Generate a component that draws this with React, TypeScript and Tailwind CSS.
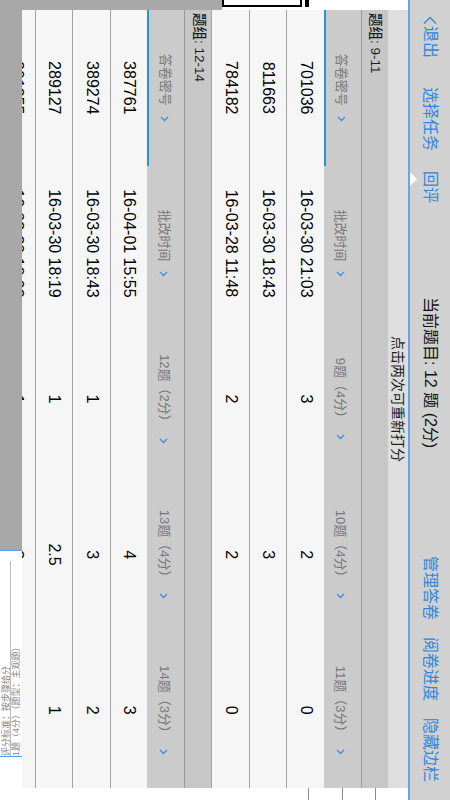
import React from "react";

type Row = [string, string, string, string, string];

const sections: { label: string; cols: string[]; rows: Row[] }[] = [
  {
    label: "题组: 9-11",
    cols: ["9题（4分）", "10题（4分）", "11题（3分）"],
    rows: [
      ["701036", "16-03-30 21:03", "3", "2", "0"],
      ["811663", "16-03-30 18:43", "", "3", ""],
      ["784182", "16-03-28 11:48", "2", "2", "0"],
    ],
  },
  {
    label: "题组: 12-14",
    cols: ["12题（2分）", "13题（4分）", "14题（3分）"],
    rows: [
      ["387761", "16-04-01 15:55", "", "4", "3"],
      ["389274", "16-03-30 18:43", "1", "3", "2"],
      ["289127", "16-03-30 18:19", "1", "2.5", "1"],
      ["291355", "16-03-30 18:02", "1", "3", ""],
    ],
  },
];

function Chevron() {
  return (
    <svg width="6" height="9" viewBox="0 0 6 9" className="ml-[10px] shrink-0">
      <path d="M1 1l3.5 3.5L1 8" fill="none" stroke="#3a8fe0" strokeWidth="1.3" />
    </svg>
  );
}

function Section({ label, cols, rows }: (typeof sections)[number]) {
  const heads = ["答卷密号", "批改时间", ...cols];
  return (
    <div className="flex shrink-0 flex-col">
      <div className="flex h-[27px] shrink-0 items-center border-b border-[#9a9a9a] bg-[#c7c7c7] pl-[3px] text-[13.5px] font-medium text-[#1a1a1a]">
        {label}
      </div>
      <div className="flex h-[37px] shrink-0 bg-[#cbcbcb]">
        {heads.map((h, i) => (
          <div
            key={h}
            className={
              i === 0
                ? "flex flex-1 items-center justify-center border-b-2 border-[#2d93d8] pt-[4px] text-[13px] text-[#777]"
                : "flex flex-1 items-center justify-center pt-[4px] text-[13px] text-[#777]"
            }
          >
            <span>{h}</span>
            <Chevron />
          </div>
        ))}
      </div>
      {rows.map((r) => (
        <div key={r[0]} className="flex h-[37.5px] shrink-0 border-b border-[#a2a2a2] bg-[#f6f6f6] text-[16px] text-black">
          {r.map((c, i) => (
            <div key={i} className="flex flex-1 items-center justify-center">
              {c}
            </div>
          ))}
        </div>
      ))}
    </div>
  );
}

export default function App() {
  return (
    <div className="h-[800px] w-[450px] overflow-hidden bg-white">
      <div className="flex h-[450px] w-[800px] origin-top-left translate-x-[450px] rotate-90 flex-col font-['Liberation_Sans','Noto_Sans_CJK_SC',sans-serif]">
        {/* top bar */}
        <div className="relative flex h-[40px] shrink-0 items-center bg-[#d1d1d1] text-[16px] text-[#3086dc]">
          <span className="ml-[16px] flex items-center">
            <svg width="9" height="14" viewBox="0 0 9 14" className="mr-[1px]">
              <path d="M7.5 1L1.5 7l6 6" fill="none" stroke="#3086dc" strokeWidth="1.3" />
            </svg>
            退出
          </span>
          <span className="ml-[29px]">选择任务</span>
          <span className="ml-[20px]">回评</span>
          <span className="ml-[94px] text-[#111]">当前题目: 12 题 (2分)</span>
          <span className="ml-auto">管理答卷</span>
          <span className="ml-[17px]">阅卷进度</span>
          <span className="ml-[17px] mr-[18px]">隐藏边栏</span>
          <svg width="14" height="7" viewBox="0 0 14 7" className="absolute bottom-0 left-[172px]">
            <path d="M0 7L7 0l7 7z" fill="#fff" />
          </svg>
        </div>
        <div className="h-[2px] shrink-0 bg-[#6aa3e8]" />

        <div className="flex h-[386px] shrink-0">
          {/* background, left edge */}
          <div className="flex w-[10px] shrink-0 flex-col">
            <div className="h-[99px] shrink-0 bg-white" />
            <div className="h-[4px] w-[7px] shrink-0 bg-black" />
            <div className="h-[3px] shrink-0 bg-white" />
            <div className="h-[80px] w-[7px] shrink-0 border-y-2 border-r-2 border-black bg-white" />
            <div className="flex-1 bg-[#a8a8a8]" />
          </div>

          {/* panel */}
          <div className="flex w-[778px] shrink-0 flex-col overflow-hidden bg-[#f6f6f6]">
            <div className="flex h-[20px] shrink-0 items-center justify-center bg-[#dedede] text-[14px] text-[#1e1e1e]">
              点击两次可重新打分
            </div>
            {sections.map((s) => (
              <Section key={s.label} {...s} />
            ))}
          </div>

          {/* background, right edge */}
          <div className="flex w-[12px] shrink-0 flex-col bg-white">
            <div className="h-[32px] shrink-0" />
            <div className="h-[1px] shrink-0 bg-[#8a8a8a]" />
            <div className="h-[32px] shrink-0" />
            <div className="h-[1px] shrink-0 bg-[#8a8a8a]" />
            <div className="h-[33px] shrink-0" />
            <div className="h-[1px] shrink-0 bg-[#8a8a8a]" />
          </div>
        </div>

        {/* background, bottom edge */}
        <div className="flex h-[22px] shrink-0">
          <div className="w-[550px] shrink-0 bg-[#a8a8a8]" />
          <div className="flex w-[207px] shrink-0 flex-col overflow-hidden border-x border-[#5d9de3] bg-white pl-[10px]">
            <div className="h-[11px] shrink-0 rotate-180 overflow-hidden text-[9px] leading-[11px] text-[#888]">
              1题（4分）（题型：主观题）
            </div>
            <div className="h-[1px] shrink-0 bg-[#bbb]" />
            <div className="h-[9px] shrink-0 rotate-180 overflow-hidden text-[9px] leading-[11px] text-[#888]">
              评分标准：按步骤给分
            </div>
          </div>
          <div className="flex-1 bg-white" />
        </div>
      </div>
    </div>
  );
}
